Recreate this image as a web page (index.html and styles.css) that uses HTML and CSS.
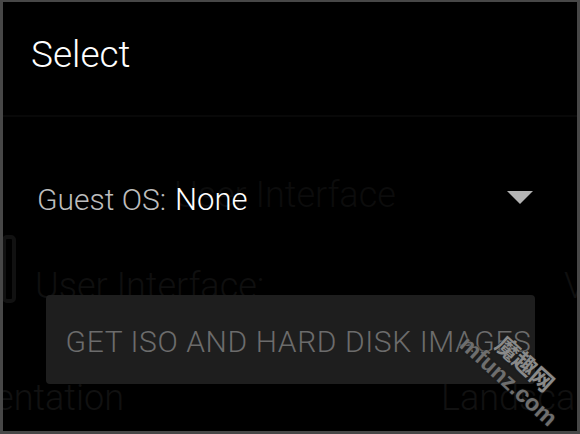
FILE: index.html
```html
<!DOCTYPE html>
<html>
<head>
<meta charset="utf-8">
<link rel="stylesheet" href="styles.css">
</head>
<body>
<div class="dialog">
  <div class="ghost" aria-hidden="true">
    <div class="g g-ui1">User Interface</div>
    <div class="g g-ui2">User Interface:</div>
    <div class="g g-v">V</div>
    <div class="g g-orient">Orientation</div>
    <div class="g g-land">Landscape</div>
    <div class="g-box"></div>
  </div>
  <div class="content">
    <div class="title">Select</div>
    <div class="divider"></div>
    <div class="spinner">
      <span class="label">Guest OS:</span>
      <span class="value">None</span>
      <svg class="arrow" width="26" height="13" viewBox="0 0 26 13"><polygon points="0,0 26,0 13,13" fill="#b3b3b3"/></svg>
    </div>
    <div class="button">GET ISO AND HARD DISK IMAGES</div>
  </div>
  <div class="watermark">
    <div class="wm-cn">魔趣网</div>
    <div class="wm-en">mfunz.com</div>
  </div>
</div>
</body>
</html>
```

FILE: styles.css
```css
html, body {
  margin: 0;
  padding: 0;
  background: #000;
}
body {
  width: 580px;
  height: 434px;
  overflow: hidden;
  font-family: Roboto, "Noto Sans", sans-serif;
}
.dialog {
  position: relative;
  box-sizing: border-box;
  width: 580px;
  height: 434px;
  border: 3px solid #474747;
  border-top-width: 2px;
  overflow: hidden;
}
.ghost {
  position: absolute;
  inset: 0;
  z-index: 0;
}
.g {
  position: absolute;
  font-weight: 300;
  font-size: 36px;
  line-height: 36px;
  color: #0e0e0e;
  white-space: nowrap;
}
.g-ui1 { left: 171px; top: 175px; color: #0c0c0c; }
.g-ui2 { left: 32px; top: 266px; color: #0f0f0f; }
.g-v { left: 561px; top: 266px; color: #0f0f0f; }
.g-orient { right: 453px; top: 378px; color: #111; }
.g-land { left: 438px; top: 378px; color: #111; }
.g-box {
  position: absolute;
  left: -1px;
  top: 233px;
  width: 6px;
  height: 60px;
  border: 4px solid #111;
  border-radius: 5px;
}
.content {
  position: relative;
  z-index: 1;
}
.title {
  padding: 34px 0 0 28px;
  height: 80px;
  box-sizing: border-box;
  font-size: 37px;
  line-height: 37px;
  font-weight: 300;
  color: #fff;
}
.divider {
  height: 2px;
  margin-top: 33px;
  background: #080808;
}
.spinner {
  display: flex;
  align-items: center;
  margin-top: 68px;
  padding-left: 34px;
  padding-right: 44px;
  height: 30px;
  font-size: 30px;
  line-height: 30px;
  font-weight: 300;
}
.label {
  color: #bdbdbd;
  margin-right: 9px;
}
.value {
  color: #fff;
  font-size: 31px;
  font-weight: 300;
}
.arrow {
  margin-left: auto;
  margin-top: -6px;
}
.button {
  margin: 80px 0 0 43px;
  width: 489px;
  height: 89px;
  box-sizing: border-box;
  background: #1e1e1e;
  border-radius: 4px;
  display: flex;
  align-items: center;
  justify-content: center;
  padding: 4px 0 0 16px;
  font-size: 30px;
  letter-spacing: 0.6px;
  font-weight: 300;
  color: #6c6c6c;
  white-space: nowrap;
}
.watermark {
  position: absolute;
  left: 486px;
  top: 310px;
  z-index: 2;
  transform: rotate(42deg);
  transform-origin: 0 0;
  font-weight: 700;
  color: #7a7a7a;
  text-shadow: 0 0 2px #222, 0 0 1px #222;
  white-space: nowrap;
}
.wm-cn {
  font-family: "Noto Sans CJK SC", sans-serif;
  font-size: 23px;
  line-height: 27px;
  padding-left: 27px;
  color: #8a8a8a;
}
.wm-en {
  font-family: "Liberation Sans", Arial, sans-serif;
  font-size: 23px;
  line-height: 23px;
  color: #6e6e6e;
}
```
